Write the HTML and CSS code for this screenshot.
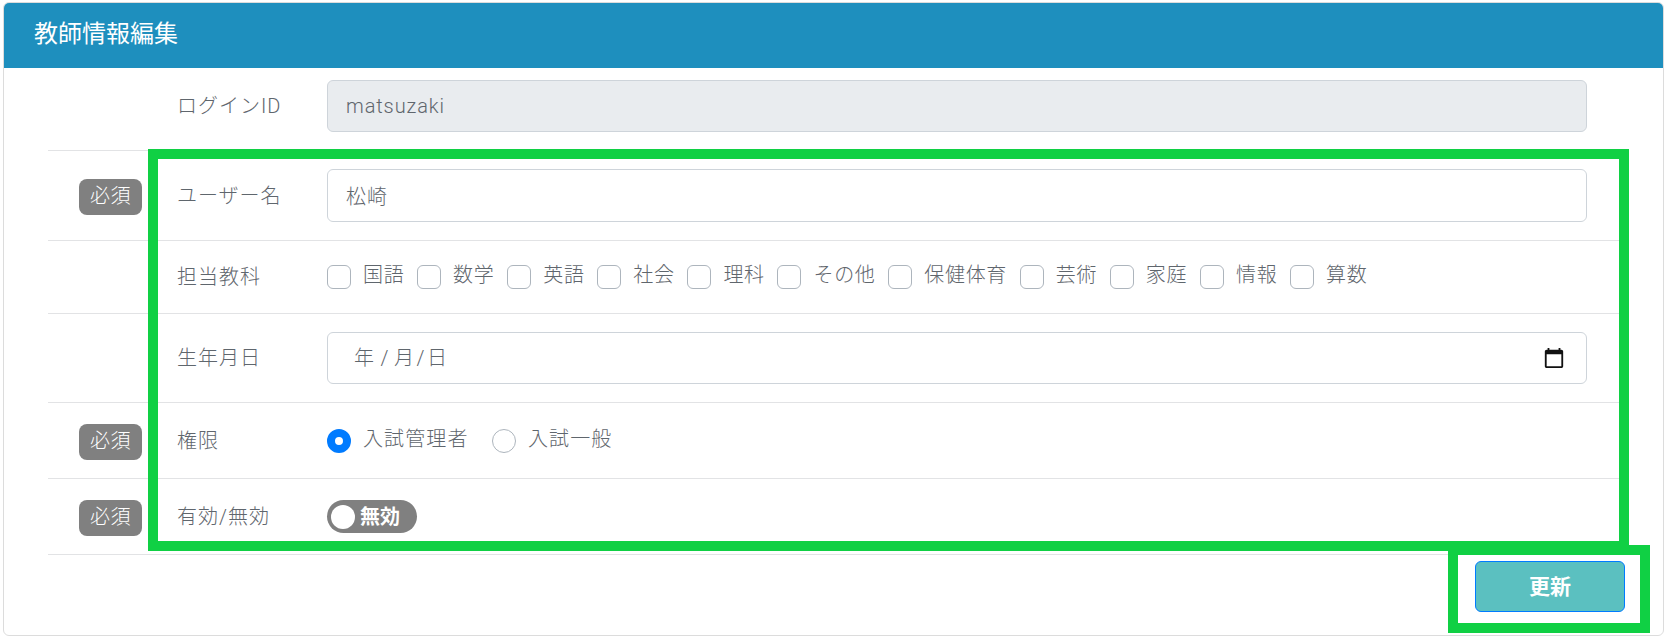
FILE: index.html
```html
<!DOCTYPE html>
<html lang="ja">
<head>
<meta charset="utf-8">
<title>教師情報編集</title>
<link rel="stylesheet" href="styles.css">
</head>
<body>
<main class="card">
  <h1 class="card-title">教師情報編集</h1>
  <div class="rows">
    <div class="row row-first">
      <span></span>
      <span class="label">ログインID</span>
      <div class="input input-disabled"><span class="input-text">matsuzaki</span></div>
    </div>
    <div class="row row-input">
      <span class="badge">必須</span>
      <span class="label">ユーザー名</span>
      <div class="input input-tall"><span class="input-text">松崎</span></div>
    </div>
    <div class="row row-check">
      <span></span>
      <span class="label">担当教科</span>
      <div class="checks">
        <span class="check"><i class="box"></i><span class="opt">国語</span></span>
        <span class="check"><i class="box"></i><span class="opt">数学</span></span>
        <span class="check"><i class="box"></i><span class="opt">英語</span></span>
        <span class="check"><i class="box"></i><span class="opt">社会</span></span>
        <span class="check"><i class="box"></i><span class="opt">理科</span></span>
        <span class="check"><i class="box"></i><span class="opt">その他</span></span>
        <span class="check"><i class="box"></i><span class="opt">保健体育</span></span>
        <span class="check"><i class="box"></i><span class="opt">芸術</span></span>
        <span class="check"><i class="box"></i><span class="opt">家庭</span></span>
        <span class="check"><i class="box"></i><span class="opt">情報</span></span>
        <span class="check"><i class="box"></i><span class="opt">算数</span></span>
      </div>
    </div>
    <div class="row row-date">
      <span></span>
      <span class="label">生年月日</span>
      <div class="input input-date">
        <span class="date-text">年<span class="date-slash">/</span>月/日</span>
        <svg class="cal" viewBox="0 0 24 24" width="22" height="22" aria-hidden="true"><path d="M20 3h-1V1h-2v2H7V1H5v2H4c-1.1 0-2 .9-2 2v16c0 1.1.9 2 2 2h16c1.1 0 2-.9 2-2V5c0-1.1-.9-2-2-2zm0 18H4V8h16v13z"/></svg>
      </div>
    </div>
    <div class="row row-short">
      <span class="badge">必須</span>
      <span class="label">権限</span>
      <div class="radios">
        <span class="radio"><i class="dot dot-on"></i><span class="opt opt-wide">入試管理者</span></span>
        <span class="radio"><i class="dot"></i><span class="opt opt-wide">入試一般</span></span>
      </div>
    </div>
    <div class="row row-short">
      <span class="badge">必須</span>
      <span class="label">有効/無効</span>
      <div class="toggle"><i class="knob"></i><span class="toggle-text">無効</span></div>
    </div>
  </div>
  <div class="actions"><button class="btn" type="button">更新</button></div>
  <div class="mark mark-form"></div>
  <div class="mark mark-btn"></div>
</main>
</body>
</html>
```
FILE: styles.css
```css
* { box-sizing: border-box; }
html, body { margin: 0; padding: 0; background: #fff; }
body {
  padding: 2px 1px 0 3px;
  font-family: Roboto, "Noto Sans CJK JP", sans-serif;
  font-weight: 300;
  color: #5f666d;
}
.card {
  position: relative;
  height: 634px;
  border: 1px solid #dcdcdc;
  border-radius: 6px;
  background: #fff;
  overflow: hidden;
}
.card-title {
  margin: 0;
  height: 65px;
  padding-left: 30px;
  background: #1e8fbe;
  color: #fff;
  font-size: 24px;
  font-weight: 400;
  line-height: 63px;
}
.rows { margin: 0 44px 0 44px; }
.row {
  display: grid;
  grid-template-columns: 129px 150px 1fr;
  align-items: center;
  padding-right: 32px;
  border-bottom: 1px solid #e2e3e5;
}
.row-first { padding-top: 12px; padding-bottom: 18px; height: 83px; }
.row-input { height: 90px; }
.row-check { height: 73px; }
.row-date { height: 89px; }
.row-short { height: 76px; }
.badge {
  justify-self: start;
  margin: 3px 0 0 31px;
  width: 63px;
  height: 36px;
  border-radius: 8px;
  background: #808080;
  color: #fff;
  font-size: 20px;
  letter-spacing: .5px;
  line-height: 35px;
  text-align: center;
}
.label {
  font-size: 20px;
  letter-spacing: 1px;
  line-height: 30px;
}
.input {
  height: 52px;
  padding: 0 18px;
  border: 1px solid #ced4da;
  border-radius: 6px;
  display: flex;
  align-items: center;
  font-size: 20px;
  letter-spacing: .9px;
}
.input-tall { height: 53px; }
.input-disabled { background: #e9ecef; }
.input-date { justify-content: space-between; padding: 0 21px 0 26px; letter-spacing: 2.5px; }
.date-text { margin-bottom: 3px; }
.date-slash { margin: 0 3px 0 4px; }
.cal { display: block; fill: #111; }
.checks { display: flex; align-items: center; }
.check { display: flex; align-items: center; margin-right: 12.7px; }
.box {
  display: block;
  width: 24px;
  height: 24px;
  border: 1px solid #adb5bd;
  border-radius: 6px;
  background: #fff;
}
.opt {
  margin-left: 12px;
  font-size: 20px;
  letter-spacing: .7px;
  line-height: 30px;
  margin-bottom: 4px;
}
.opt-wide { letter-spacing: 1.1px; }
.radios { display: flex; align-items: center; }
.radio { display: flex; align-items: center; margin-right: 23.5px; }
.dot {
  display: block;
  width: 24px;
  height: 24px;
  border: 1px solid #adb5bd;
  border-radius: 50%;
  background: #fff;
}
.dot-on { border: 8px solid #007bff; }
.toggle {
  display: flex;
  align-items: center;
  width: 90px;
  height: 33px;
  padding-left: 4px;
  border-radius: 17px;
  background: #808080;
}
.knob {
  display: block;
  width: 24px;
  height: 24px;
  border-radius: 50%;
  background: #fff;
}
.toggle-text {
  margin-left: 5px;
  color: #fff;
  font-size: 20px;
  font-weight: 700;
  line-height: 30px;
}
.actions { display: flex; justify-content: flex-end; padding: 6px 38px 0 0; }
.btn {
  width: 150px;
  height: 51px;
  border: 1px solid #007bff;
  border-radius: 6px;
  background: #5bc0c0;
  color: #fff;
  font-family: inherit;
  font-size: 21px;
  font-weight: 700;
  padding: 0 0 3px;
}
.mark { position: absolute; border: 10px solid #10d044; pointer-events: none; }
.mark-form { left: 144px; top: 146px; width: 1481px; height: 402px; }
.mark-btn { left: 1444px; top: 542px; width: 202px; height: 88px; }
```
